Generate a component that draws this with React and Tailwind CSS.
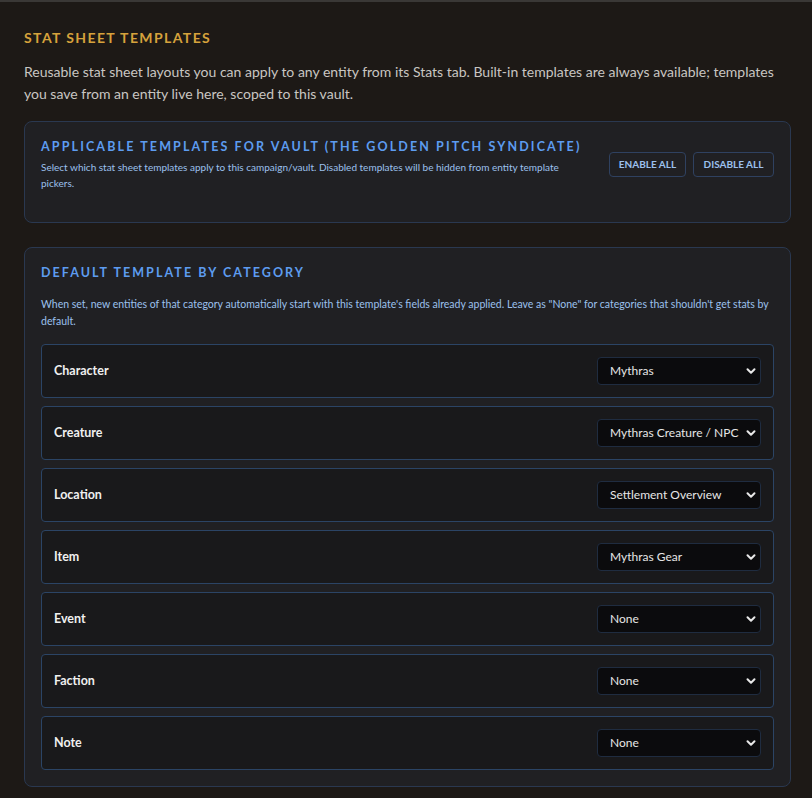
import React from "react";

const rows = [
  ["Character", "Mythras"],
  ["Creature", "Mythras Creature / NPC"],
  ["Location", "Settlement Overview"],
  ["Item", "Mythras Gear"],
  ["Event", "None"],
  ["Faction", "None"],
  ["Note", "None"],
];

function Select({ value }) {
  return (
    <div className="relative w-[164px] h-[28px] rounded-[4px] border border-[#1f2c40] bg-[#0b0b0d] flex items-center pl-[12px] pr-[20px]">
      <span className="text-[12px] text-[#e6e6e6] whitespace-nowrap">{value}</span>
      <svg className="absolute right-[3px] top-1/2 -translate-y-1/2" width="12" height="12" viewBox="0 0 12 12">
        <path d="M2.5 4.2 L6 7.7 L9.5 4.2" fill="none" stroke="#e8e8e8" strokeWidth="2" strokeLinecap="round" strokeLinejoin="round" />
      </svg>
    </div>
  );
}

export default function App() {
  return (
    <div
      className="min-h-[798px] bg-[#1d1916] border-t-2 border-[#3a3836] pl-[24px] pr-[21px] pt-[27px] pb-[12px]"
      style={{ fontFamily: "Lato, 'Open Sans', sans-serif" }}
    >
      <h2 className="text-[14px] font-bold tracking-[0.1em] text-[#d6a23c] leading-[18px]">
        STAT SHEET TEMPLATES
      </h2>
      <p className="mt-[14px] text-[14px] leading-[22px] text-[#c9c6c2]">
        Reusable stat sheet layouts you can apply to any entity from its Stats tab. Built-in templates are always available; templates you save from an entity live here, scoped to this vault.
      </p>

      <div className="mt-[16px] h-[102px] rounded-[8px] border border-[#2a3850] bg-[#202023] pl-[16px] pr-[16px] pt-[16px] flex items-start justify-between gap-[10px]">
        <div className="flex-1 min-w-0">
          <h3 className="text-[12.5px] font-bold tracking-[0.17em] text-[#5d9cf0] leading-[18px] whitespace-nowrap">
            APPLICABLE TEMPLATES FOR VAULT (THE GOLDEN PITCH SYNDICATE)
          </h3>
          <p className="mt-[3px] text-[10px] leading-[16px] text-[#9cc0ee] max-w-[525px]">
            Select which stat sheet templates apply to this campaign/vault. Disabled templates will be hidden from entity template pickers.
          </p>
        </div>
        <div className="flex gap-[7px] mt-[14px] shrink-0">
          <button className="h-[25px] w-[77px] rounded-[4px] border border-[#2f4160] text-[10px] font-bold text-[#9cc0ee] whitespace-nowrap">
            ENABLE ALL
          </button>
          <button className="h-[25px] w-[81px] rounded-[4px] border border-[#2f4160] text-[10px] font-bold text-[#9cc0ee] whitespace-nowrap">
            DISABLE ALL
          </button>
        </div>
      </div>

      <div className="mt-[24px] rounded-[8px] border border-[#2a3850] bg-[#202023] px-[16px] pt-[16px] pb-[16px]">
        <h3 className="text-[12.5px] font-bold tracking-[0.165em] text-[#5d9cf0] leading-[18px]">
          DEFAULT TEMPLATE BY CATEGORY
        </h3>
        <p className="mt-[14px] text-[10.5px] leading-[17px] text-[#9cc0ee]">
          When set, new entities of that category automatically start with this template's fields already applied. Leave as "None" for categories that shouldn't get stats by default.
        </p>
        <div className="mt-[14px] flex flex-col gap-[8px]">
          {rows.map(([label, value]) => (
            <div
              key={label}
              className="h-[54px] rounded-[4px] border border-[#2b4465] bg-[#19191b] flex items-center justify-between pl-[12px] pr-[12px]"
            >
              <span className="text-[12.5px] font-bold text-[#f0f0f0]">{label}</span>
              <Select value={value} />
            </div>
          ))}
        </div>
      </div>
    </div>
  );
}
